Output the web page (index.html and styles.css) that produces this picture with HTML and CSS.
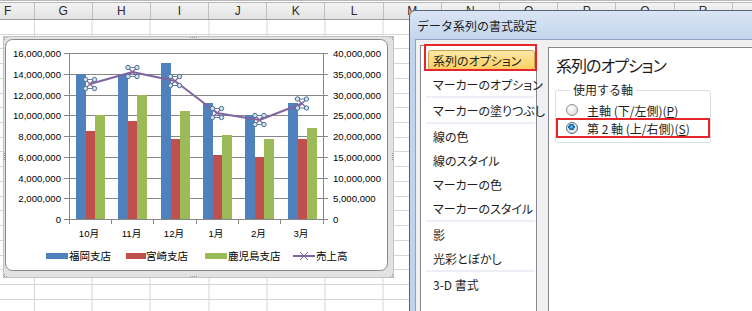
FILE: index.html
```html
<!DOCTYPE html>
<html lang="ja">
<head>
<meta charset="utf-8">
<title>データ系列の書式設定</title>
<link rel="stylesheet" href="styles.css">
</head>
<body>
<div class="sheet">
  <div class="topbar"></div>
  <div class="colheads">
    <div class="ch ch-f">F</div>
    <div class="ch">G</div>
    <div class="ch">H</div>
    <div class="ch">I</div>
    <div class="ch">J</div>
    <div class="ch">K</div>
    <div class="ch">L</div>
    <div class="ch">M</div>
    <div class="ch">N</div>
    <div class="ch">O</div>
    <div class="ch">P</div>
    <div class="ch">Q</div>
    <div class="ch">R</div>
  </div>
  <div class="grid"></div>

  <div class="chart">
    <svg class="chart-svg" width="391" height="242" viewBox="3 36 391 242" xmlns="http://www.w3.org/2000/svg">
      <rect x="3.5" y="36.5" width="390" height="241" fill="#e2e2e2" stroke="#c2c2c2"/>
      <rect x="5.5" y="39.5" width="382" height="231" rx="7" fill="#ffffff" stroke="#8a8a8a"/>
      <g fill="#9a9a9a">
        <rect x="190" y="37" width="1" height="1"/><rect x="192" y="37" width="1" height="1"/><rect x="194" y="37" width="1" height="1"/><rect x="196" y="37" width="1" height="1"/>
        <rect x="190" y="276" width="1" height="1"/><rect x="192" y="276" width="1" height="1"/><rect x="194" y="276" width="1" height="1"/><rect x="196" y="276" width="1" height="1"/>
        <rect x="4" y="37" width="1" height="1"/><rect x="6" y="37" width="1" height="1"/><rect x="4" y="39" width="1" height="1"/>
        <rect x="390" y="37" width="1" height="1"/><rect x="392" y="37" width="1" height="1"/><rect x="392" y="39" width="1" height="1"/>
        <rect x="4" y="276" width="1" height="1"/><rect x="6" y="276" width="1" height="1"/><rect x="4" y="274" width="1" height="1"/>
        <rect x="390" y="276" width="1" height="1"/><rect x="392" y="276" width="1" height="1"/><rect x="392" y="274" width="1" height="1"/>
        <rect x="4" y="153" width="1" height="1"/><rect x="4" y="155" width="1" height="1"/><rect x="4" y="157" width="1" height="1"/><rect x="4" y="159" width="1" height="1"/>
        <rect x="392" y="153" width="1" height="1"/><rect x="392" y="155" width="1" height="1"/><rect x="392" y="157" width="1" height="1"/><rect x="392" y="159" width="1" height="1"/>
      </g>

      <!-- gridlines -->
      <g stroke="#878787" stroke-width="1">
        <line x1="64" y1="53.5" x2="328" y2="53.5"/>
        <line x1="64" y1="74.5" x2="328" y2="74.5"/>
        <line x1="64" y1="95.5" x2="328" y2="95.5"/>
        <line x1="64" y1="115.5" x2="328" y2="115.5"/>
        <line x1="64" y1="136.5" x2="328" y2="136.5"/>
        <line x1="64" y1="157.5" x2="328" y2="157.5"/>
        <line x1="64" y1="178.5" x2="328" y2="178.5"/>
        <line x1="64" y1="198.5" x2="328" y2="198.5"/>
        <line x1="64" y1="219.5" x2="328" y2="219.5"/>
        <line x1="69.5" y1="53" x2="69.5" y2="224"/>
        <line x1="323.5" y1="53" x2="323.5" y2="224"/>
        <line x1="111.5" y1="219" x2="111.5" y2="224"/>
        <line x1="153.5" y1="219" x2="153.5" y2="224"/>
        <line x1="196.5" y1="219" x2="196.5" y2="224"/>
        <line x1="238.5" y1="219" x2="238.5" y2="224"/>
        <line x1="280.5" y1="219" x2="280.5" y2="224"/>
      </g>

      <!-- bars -->
      <g fill="#4f81bd">
        <rect x="76" y="74" width="10" height="145"/>
        <rect x="118" y="74" width="10" height="145"/>
        <rect x="161" y="63" width="10" height="156"/>
        <rect x="203" y="103" width="10" height="116"/>
        <rect x="245" y="115" width="10" height="104"/>
        <rect x="288" y="103" width="10" height="116"/>
      </g>
      <g fill="#c0504d">
        <rect x="86" y="131" width="9" height="88"/>
        <rect x="128" y="121" width="9" height="98"/>
        <rect x="171" y="139" width="9" height="80"/>
        <rect x="213" y="155" width="9" height="64"/>
        <rect x="255" y="157" width="9" height="62"/>
        <rect x="298" y="139" width="9" height="80"/>
      </g>
      <g fill="#9bbb59">
        <rect x="95" y="115" width="10" height="104"/>
        <rect x="137" y="95" width="10" height="124"/>
        <rect x="180" y="111" width="10" height="108"/>
        <rect x="222" y="135" width="10" height="84"/>
        <rect x="264" y="139" width="10" height="80"/>
        <rect x="307" y="128" width="10" height="91"/>
      </g>

      <!-- line series -->
      <polyline points="90,84 132.5,72 175,81 217,113 259.5,120 302,103.5" fill="none" stroke="#8064a2" stroke-width="2" stroke-linejoin="round"/>

      <g transform="translate(90 84)"><use href="#marker"/></g>
      <g transform="translate(132.5 72)"><use href="#marker"/></g>
      <g transform="translate(175 81)"><use href="#marker"/></g>
      <g transform="translate(217 113)"><use href="#marker"/></g>
      <g transform="translate(259.5 120)"><use href="#marker"/></g>
      <g transform="translate(302 103.5)"><use href="#marker"/></g>

      <defs>
        <g id="marker">
          <line x1="-4.5" y1="-4.5" x2="4.5" y2="4.5" stroke="#8064a2" stroke-width="1.2"/>
          <line x1="4.5" y1="-4.5" x2="-4.5" y2="4.5" stroke="#8064a2" stroke-width="1.2"/>
          <line x1="-4.5" y1="-4.5" x2="4.5" y2="-4.5" stroke="#5f7f9c" stroke-width="1"/>
          <line x1="-4.5" y1="4.5" x2="4.5" y2="4.5" stroke="#5f7f9c" stroke-width="1"/>
          <circle cx="-4.5" cy="-4.5" r="2.2" fill="#d4e2f0" stroke="#4a6f93" stroke-width="1"/>
          <circle cx="4.5" cy="-4.5" r="2.2" fill="#d4e2f0" stroke="#4a6f93" stroke-width="1"/>
          <circle cx="-4.5" cy="4.5" r="2.2" fill="#d4e2f0" stroke="#4a6f93" stroke-width="1"/>
          <circle cx="4.5" cy="4.5" r="2.2" fill="#d4e2f0" stroke="#4a6f93" stroke-width="1"/>
        </g>
      </defs>

      <!-- axis labels -->
      <g class="lbl" text-anchor="end">
        <text x="61" y="56.5">16,000,000</text>
        <text x="61" y="77.5">14,000,000</text>
        <text x="61" y="98.5">12,000,000</text>
        <text x="61" y="118.5">10,000,000</text>
        <text x="61" y="139.5">8,000,000</text>
        <text x="61" y="160.5">6,000,000</text>
        <text x="61" y="181.5">4,000,000</text>
        <text x="61" y="201.5">2,000,000</text>
        <text x="61" y="222.5">0</text>
      </g>
      <g class="lbl" text-anchor="start">
        <text x="333" y="56.5">40,000,000</text>
        <text x="333" y="77.5">35,000,000</text>
        <text x="333" y="98.5">30,000,000</text>
        <text x="333" y="118.5">25,000,000</text>
        <text x="333" y="139.5">20,000,000</text>
        <text x="333" y="160.5">15,000,000</text>
        <text x="333" y="181.5">10,000,000</text>
        <text x="333" y="201.5">5,000,000</text>
        <text x="333" y="222.5">0</text>
      </g>
      <g class="lbl" text-anchor="middle">
        <text x="89" y="237">10月</text>
        <text x="131.5" y="237">11月</text>
        <text x="174" y="237">12月</text>
        <text x="216" y="237">1月</text>
        <text x="258.5" y="237">2月</text>
        <text x="301" y="237">3月</text>
      </g>

      <!-- legend -->
      <rect x="46" y="253" width="22" height="6" fill="#4f81bd"/>
      <text class="lgd" x="69" y="260">福岡支店</text>
      <rect x="126" y="253" width="20" height="6" fill="#c0504d"/>
      <text class="lgd" x="146" y="260">宮崎支店</text>
      <rect x="205" y="253" width="22" height="6" fill="#9bbb59"/>
      <text class="lgd" x="228" y="260">鹿児島支店</text>
      <line x1="293" y1="256" x2="315" y2="256" stroke="#8064a2" stroke-width="2"/>
      <line x1="300" y1="252" x2="308" y2="260" stroke="#8064a2" stroke-width="1"/>
      <line x1="308" y1="252" x2="300" y2="260" stroke="#8064a2" stroke-width="1"/>
      <text class="lgd" x="316" y="260">売上高</text>
    </svg>
  </div>

  <div class="dialog">
    <div class="dtitle">データ系列の書式設定</div>
    <div class="dbody">
      <div class="list">
        <div class="item sel">系列のオプション</div>
        <div class="item">マーカーのオプション</div>
        <div class="sep"></div>
        <div class="item">マーカーの塗りつぶし</div>
        <div class="sep"></div>
        <div class="item">線の色</div>
        <div class="item">線のスタイル</div>
        <div class="item">マーカーの色</div>
        <div class="item">マーカーのスタイル</div>
        <div class="sep"></div>
        <div class="item">影</div>
        <div class="item">光彩とぼかし</div>
        <div class="sep"></div>
        <div class="item">3-D 書式</div>
        <div class="redbox redbox-list"></div>
      </div>
      <div class="panel">
        <div class="ptitle">系列のオプション</div>
        <fieldset class="group">
          <legend class="glegend">使用する軸</legend>
          <div class="row">
            <span class="radio"></span>
            <span class="rlabel">主軸 (下/左側)(<u>P</u>)</span>
          </div>
          <div class="row row-mark">
            <span class="radio on"></span>
            <span class="rlabel">第 2 軸 (上/右側)(<u>S</u>)</span>
          </div>
        </fieldset>
      </div>
    </div>
  </div>
</div>
</body>
</html>
```

FILE: styles.css
```css
* { box-sizing: border-box; }

html, body {
  margin: 0;
  padding: 0;
  width: 752px;
  height: 311px;
  overflow: hidden;
  background: #ffffff;
}

.sheet {
  position: relative;
  width: 752px;
  height: 311px;
  overflow: hidden;
  font-family: "Noto Sans CJK JP", "Liberation Sans", sans-serif;
}

.topbar {
  height: 3px;
  background: #ffffff;
  border-top: 1px solid #b8b8b8;
  border-bottom: 1px solid #b8b8b8;
}

.colheads {
  display: flex;
  height: 17px;
  background: linear-gradient(#f3f3f3, #e3e3e3);
  border-bottom: 1px solid #9c9c9c;
}

.ch {
  flex: 0 0 58.2px;
  border-right: 1px solid #bfbfbf;
  font: 12px "Liberation Sans", "DejaVu Sans", sans-serif;
  color: #2b2b2b;
  display: flex;
  align-items: center;
  justify-content: center;
  line-height: 1;
}

.ch-f {
  flex-basis: 34.5px;
  justify-content: flex-start;
  padding-left: 4px;
}

.grid {
  height: 291px;
  background-color: #ffffff;
  background-image:
    linear-gradient(to right, transparent 33.5px, #d6d6d6 33.5px, #d6d6d6 34.5px, transparent 34.5px),
    repeating-linear-gradient(to right, transparent 0, transparent 57.2px, #d6d6d6 57.2px, #d6d6d6 58.2px),
    repeating-linear-gradient(to bottom, transparent 0, transparent 13.72px, #d6d6d6 13.72px, #d6d6d6 14.72px);
  background-position: 0 0, 34.5px 0, 0 0;
  background-repeat: no-repeat, repeat, repeat;
}

/* chart object floating over the sheet */
.chart {
  position: absolute;
  left: 3px;
  top: 36px;
  width: 391px;
  height: 242px;
}

.chart-svg { display: block; }

.lbl {
  font-family: "Liberation Sans", "Noto Sans CJK JP", sans-serif;
  font-size: 9.6px;
  fill: #000000;
}

.lgd {
  font-family: "Noto Sans CJK JP", sans-serif;
  font-size: 10.5px;
  fill: #000000;
}

/* dialog window floating over the sheet */
.dialog {
  position: absolute;
  left: 409px;
  top: 10px;
  width: 360px;
  height: 320px;
  border: 1px solid #55647c;
  border-radius: 6px 6px 0 0;
  background: linear-gradient(#dae5f4, #c3d5ee 28px, #bfd2ee);
  padding-left: 5px;
  display: flex;
  flex-direction: column;
}

.dtitle {
  height: 28px;
  flex: 0 0 28px;
  display: flex;
  align-items: center;
  padding-left: 2px;
  font-size: 12px;
  color: #1b1b1b;
}

.dbody {
  flex: 1;
  display: flex;
  gap: 11px;
  align-items: flex-start;
  background: #f0f0f0;
  border-top: 1px solid #8ea2c0;
  border-left: 1px solid #8ea2c0;
  padding: 5px 0 0 4px;
}

.list {
  position: relative;
  width: 117px;
  height: 280px;
  border: 1px solid #828790;
  background: #ffffff;
  padding: 2px 1px 0 5px;
}

.item {
  height: 24px;
  display: flex;
  align-items: center;
  padding-left: 7px;
  font-size: 12px;
  font-feature-settings: "palt";
  color: #1e1e1e;
  white-space: nowrap;
}

.item.sel {
  height: 20px;
  margin: 2px 0 2px 2px;
  padding-left: 4px;
  border: 1px solid #c9a552;
  border-radius: 3px;
  background: linear-gradient(#fdeaa9, #fcdc83 45%, #fbd066);
}

.sep {
  height: 2px;
  background: #eceff5;
}

.redbox {
  position: absolute;
  border: 2px solid #e5262b;
  pointer-events: none;
}

.redbox-list {
  left: 3px;
  top: -2px;
  width: 113px;
  height: 27px;
}

.panel {
  flex: 1;
  height: 280px;
  margin-top: 2px;
  border: 1px solid #828790;
  background: #ffffff;
  padding: 5px 0 0 6px;
}

.ptitle {
  height: 23px;
  display: flex;
  align-items: center;
  padding-left: 1px;
  font-size: 16px;
  letter-spacing: -1px;
  font-feature-settings: "palt";
  color: #1a1a1a;
}

.group {
  width: 155px;
  margin: 6px 0 0 0;
  padding: 3px 0 4px 10px;
  border: 1px solid #d5dfe5;
  border-radius: 3px;
}

.glegend {
  margin-left: 4px;
  padding: 0 3px;
  font-size: 12px;
  color: #1e1e1e;
  line-height: 16px;
}

.row {
  height: 18px;
  display: flex;
  align-items: center;
  gap: 9px;
  font-size: 12px;
  color: #1e1e1e;
  white-space: nowrap;
}

.row-mark {
  height: 20px;
  margin: -1px 0 0 -10px;
  padding-left: 8px;
  border: 2px solid #e5262b;
  width: 154px;
}

.radio {
  width: 12px;
  height: 12px;
  flex: 0 0 12px;
  border-radius: 50%;
  border: 1px solid #8e8f8f;
  background: radial-gradient(circle at 40% 35%, #ffffff 0, #f2f2f2 35%, #d2d2d2 100%);
}

.radio.on {
  border-color: #4f6a80;
  background:
    radial-gradient(circle at 45% 40%, #8fdcff 0, #1c8fd6 1.6px, #0b4f86 3px, transparent 3.4px),
    radial-gradient(circle at 40% 35%, #ffffff 0, #ececec 50%, #cdcdcd 100%);
}

.rlabel u { text-decoration: underline; }
```
